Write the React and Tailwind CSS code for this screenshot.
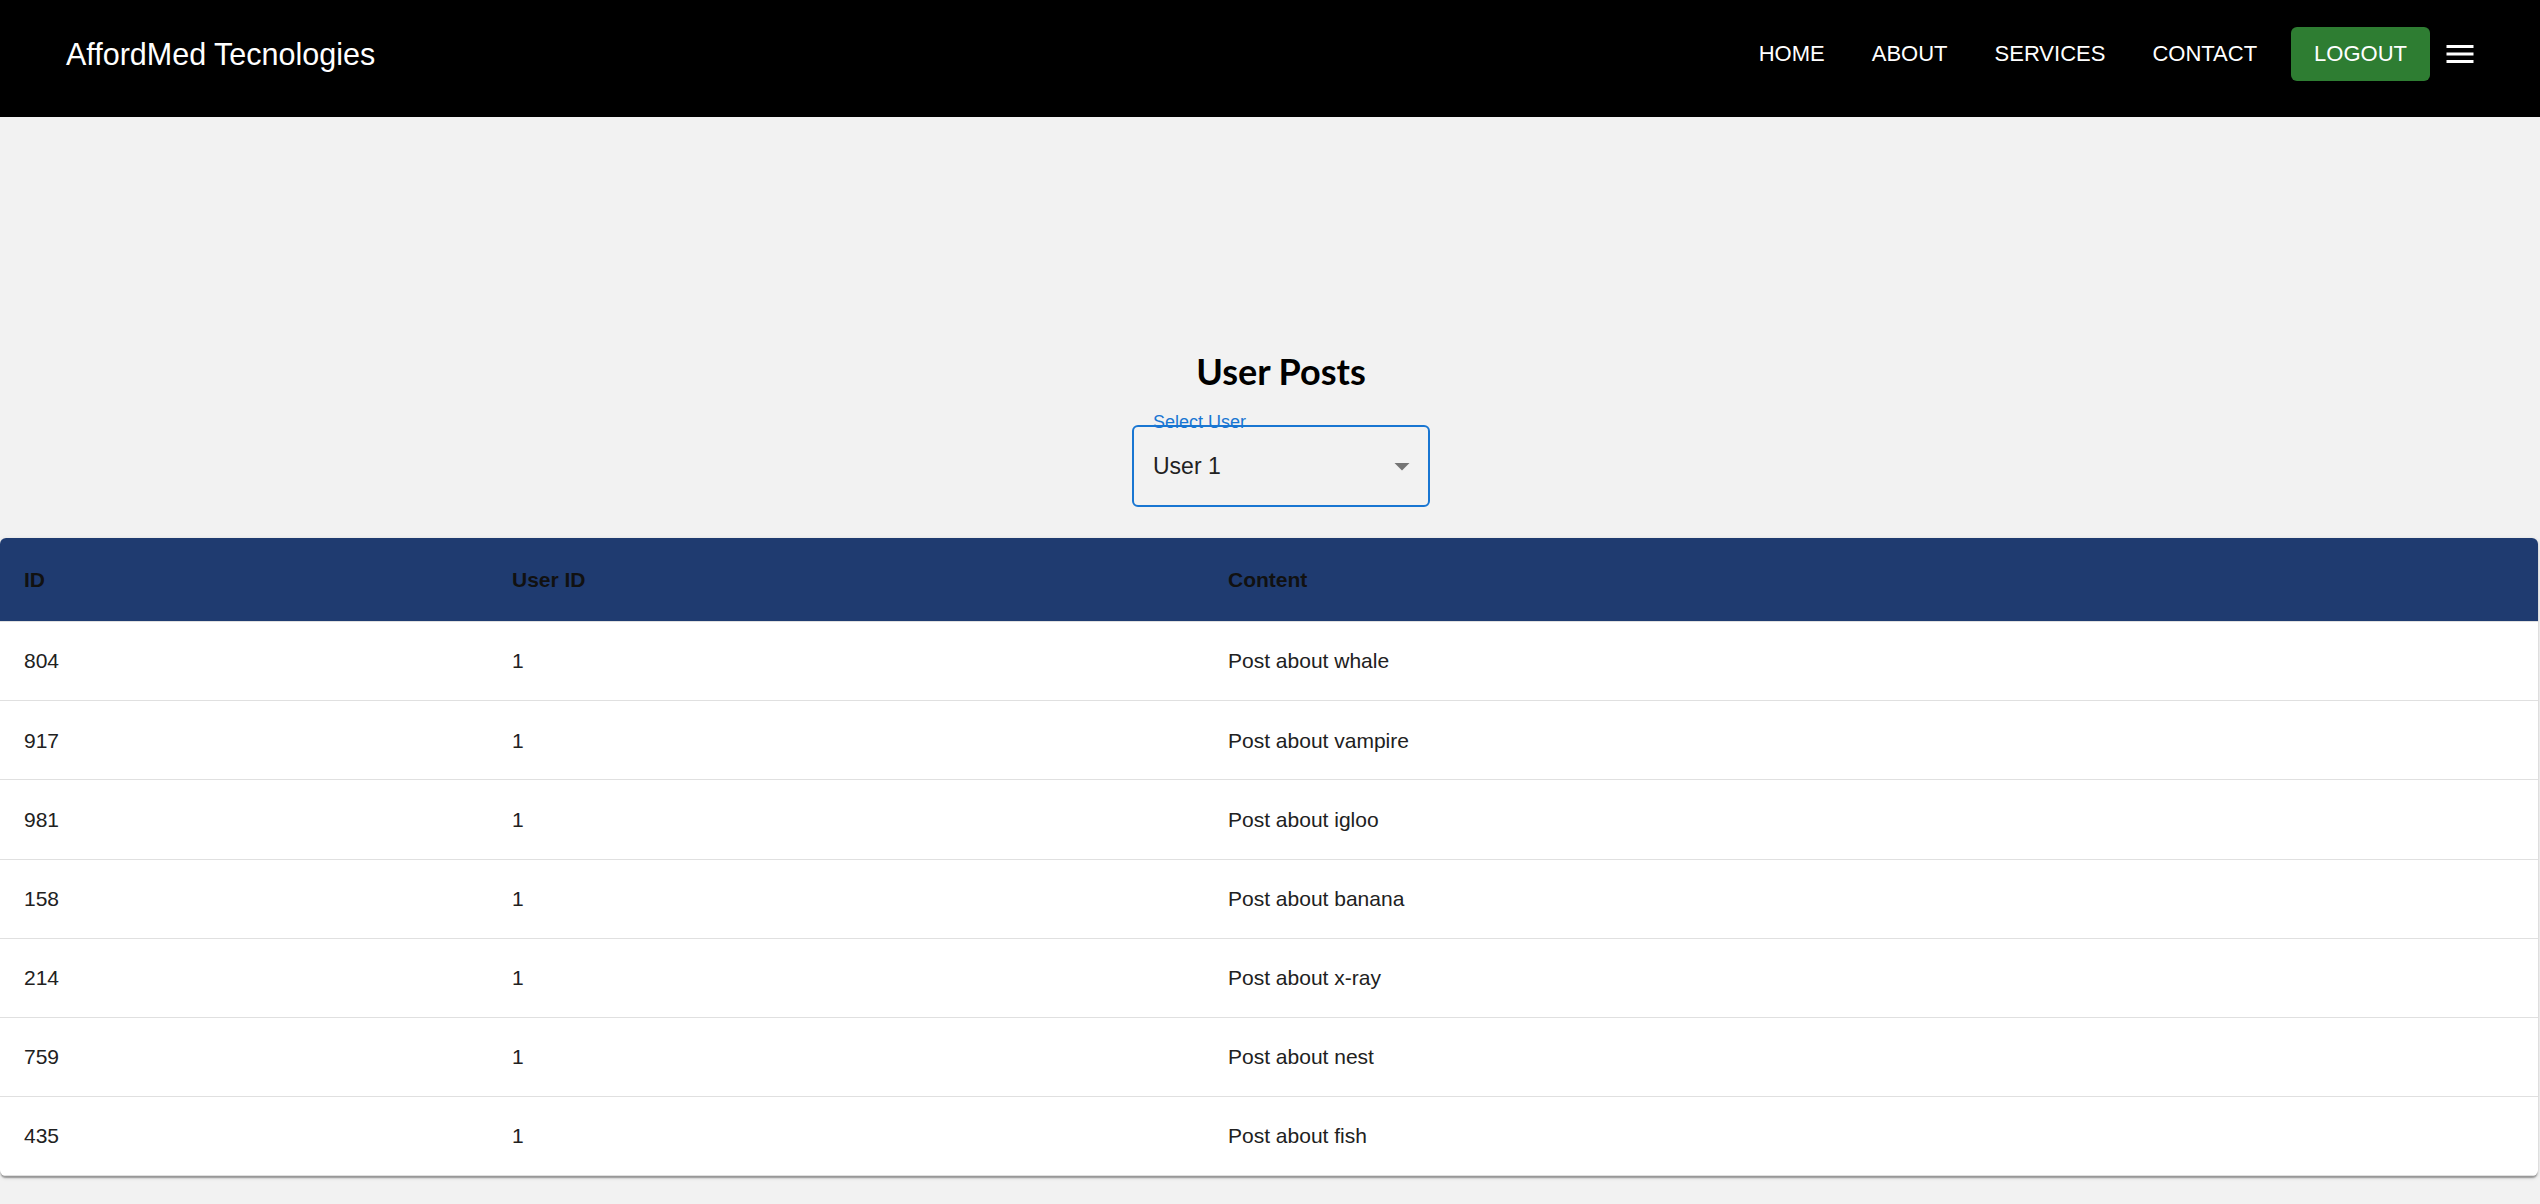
import React from "react";

const rows = [
  ["804", "1", "Post about whale"],
  ["917", "1", "Post about vampire"],
  ["981", "1", "Post about igloo"],
  ["158", "1", "Post about banana"],
  ["214", "1", "Post about x-ray"],
  ["759", "1", "Post about nest"],
  ["435", "1", "Post about fish"],
];

export default function App() {
  return (
    <div
      className="min-h-screen w-full bg-[#f2f2f2]"
      style={{ fontFamily: '"Liberation Sans", Arial, sans-serif' }}
    >
      {/* Top bar */}
      <header className="h-[117px] w-full bg-black">
        <div className="flex h-[108px] items-center pl-[66px] pr-[62px]">
          <div className="text-[30.5px] leading-[36px] text-white">AffordMed Tecnologies</div>
          <nav className="ml-auto flex items-center">
            <div className="flex items-center gap-[3px] text-[22px] leading-[36px] text-white">
              <span className="px-[22px] py-[9px]">HOME</span>
              <span className="px-[22px] py-[9px]">ABOUT</span>
              <span className="px-[22px] py-[9px]">SERVICES</span>
              <span className="px-[22px] py-[9px]">CONTACT</span>
            </div>
            <button className="ml-[12px] flex h-[54px] items-center rounded-[6px] bg-[#2e7d32] px-[23px] text-[22px] leading-[36px] text-white shadow-[0_3px_1.5px_-1.5px_rgba(0,0,0,0.2),0_1.5px_1.5px_0_rgba(0,0,0,0.14)]">
              LOGOUT
            </button>
            <div className="ml-[12px] flex h-[36px] w-[36px] items-center justify-center">
              <svg width="36" height="36" viewBox="0 0 24 24" fill="#ffffff">
                <path d="M3 18h18v-2H3zm0-5h18v-2H3zm0-7v2h18V6z" />
              </svg>
            </div>
          </nav>
        </div>
      </header>

      {/* Title + select */}
      <div className="flex flex-col items-center pl-[22px]">
        <h1
          className="mt-[230px] h-[48px] text-[36px] font-bold leading-[48px] text-black"
          style={{ fontFamily: 'Lato, "Noto Sans", sans-serif' }}
        >
          User Posts
        </h1>
        <div className="relative mt-[30px] h-[82px] w-[298px] rounded-[6px] border-2 border-[#1976d2]">
          <span className="absolute left-[19px] top-[-14px] h-[18px] text-[18px] leading-[18px] text-[#1976d2]">
            Select User
          </span>
          <div className="flex h-full items-center pl-[19px] text-[23px] text-[#212121]">User 1</div>
          <svg
            className="absolute right-[8px] top-[21px]"
            width="36"
            height="36"
            viewBox="0 0 24 24"
            fill="#757575"
          >
            <path d="M7 10l5 5 5-5z" />
          </svg>
        </div>
      </div>

      {/* Table */}
      <div className="mr-[2px] mt-[31px] overflow-hidden rounded-[6px] bg-white shadow-[0_3px_1.5px_-1.5px_rgba(0,0,0,0.2),0_1.5px_1.5px_0_rgba(0,0,0,0.14),0_1.5px_4.5px_0_rgba(0,0,0,0.12)]">
        <div className="grid h-[84px] grid-cols-[488px_716px_1fr] items-center border-b border-[#e0e0e0] bg-[#1f3b70] text-[21px] font-bold text-[#111111]">
          <div className="pl-[24px]">ID</div>
          <div className="pl-[24px]">User ID</div>
          <div className="pl-[24px]">Content</div>
        </div>
        {rows.map((r) => (
          <div
            key={r[0]}
            className="grid h-[79.2px] grid-cols-[488px_716px_1fr] items-center border-b border-[#e0e0e0] text-[21px] text-[#212121]"
          >
            <div className="pl-[24px]">{r[0]}</div>
            <div className="pl-[24px]">{r[1]}</div>
            <div className="pl-[24px]">{r[2]}</div>
          </div>
        ))}
      </div>
    </div>
  );
}
